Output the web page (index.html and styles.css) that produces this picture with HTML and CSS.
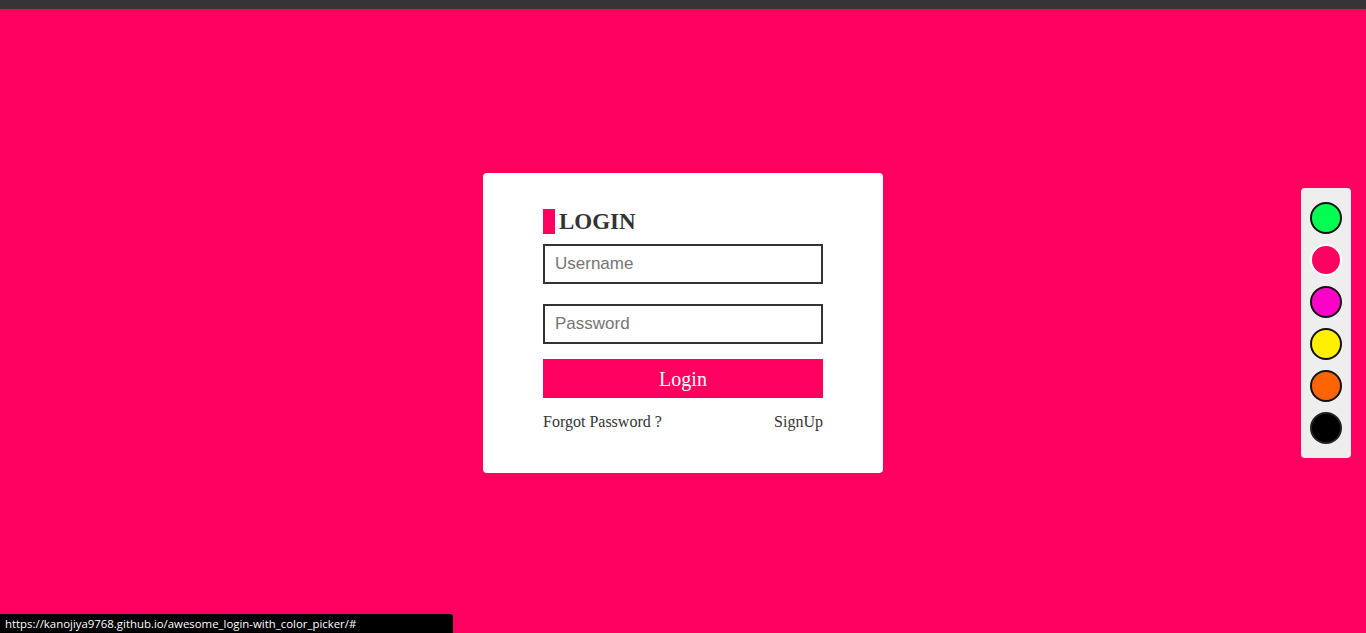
FILE: index.html
```html
<!DOCTYPE html>
<html lang="en">
<head>
<meta charset="utf-8">
<title>Login</title>
<link rel="stylesheet" href="styles.css">
</head>
<body>
<div class="topbar"></div>
<main class="stage">
  <form class="card">
    <h1 class="title"><span class="title-mark"></span><span>LOGIN</span></h1>
    <input class="field" type="text" placeholder="Username">
    <input class="field field-pass" type="password" placeholder="Password">
    <button class="btn" type="button">Login</button>
    <div class="links">
      <a href="#">Forgot Password ?</a>
      <a href="#">SignUp</a>
    </div>
  </form>
</main>
<div class="picker">
  <span class="dot dot-green"></span>
  <span class="dot dot-pink"></span>
  <span class="dot dot-magenta"></span>
  <span class="dot dot-yellow"></span>
  <span class="dot dot-orange"></span>
  <span class="dot dot-black"></span>
</div>
<div class="status">https://kanojiya9768.github.io/awesome_login-with_color_picker/#</div>
</body>
</html>
```
FILE: styles.css
```css
* { box-sizing: border-box; }
html, body { margin: 0; padding: 0; }
body {
  background: #ff0060;
  font-family: "Liberation Serif", "Times New Roman", serif;
  height: 633px;
  overflow: hidden;
}
.topbar {
  height: 9px;
  background: #353535;
}
.stage {
  height: 624px;
  padding-top: 4px;
  display: flex;
  align-items: center;
  justify-content: center;
}
.card {
  width: 400px;
  height: 300px;
  background: #fff;
  border-radius: 4px;
  padding: 36px 60px 0;
  display: flex;
  flex-direction: column;
}
.title {
  margin: 0 0 10px;
  height: 25px;
  display: flex;
  align-items: center;
  gap: 4px;
  font-size: 23px;
  font-weight: bold;
  color: #333;
  line-height: 25px;
}
.title-mark {
  width: 12px;
  height: 25px;
  background: #ff0060;
}
.field {
  width: 280px;
  height: 40px;
  border: 2px solid #333;
  border-radius: 0;
  padding: 0 10px;
  font-family: "Liberation Sans", Arial, sans-serif;
  font-size: 17px;
  color: #333;
  outline: none;
  margin: 0;
}
.field::placeholder { color: #757575; }
.field-pass { margin-top: 20px; }
.btn {
  margin-top: 15px;
  width: 280px;
  height: 39px;
  border: none;
  background: #ff0060;
  color: #fff;
  font-family: "Liberation Serif", "Times New Roman", serif;
  font-size: 20px;
  padding: 1px 0 0;
  cursor: pointer;
}
.links {
  margin-top: 15px;
  display: flex;
  justify-content: space-between;
  font-size: 16px;
}
.links a {
  color: #333;
  text-decoration: none;
}
.picker {
  position: fixed;
  top: 188px;
  right: 15px;
  width: 50px;
  padding: 14px 9px;
  background: #eee;
  border-radius: 4px;
  display: flex;
  flex-direction: column;
  gap: 10px;
}
.dot {
  display: block;
  width: 32px;
  height: 32px;
  border-radius: 50%;
  border: 2px solid #111;
}
.dot-green { background: #00ff50; }
.dot-pink { background: #ff0060; border-color: #fff; }
.dot-magenta { background: #ff00c8; }
.dot-yellow { background: #fff000; }
.dot-orange { background: #ff6400; }
.dot-black { background: #000; border-color: #222; }
.status {
  position: fixed;
  left: 0;
  bottom: 0;
  width: 453px;
  height: 19px;
  background: #000;
  color: #fff;
  border-top-right-radius: 3px;
  font-family: "Open Sans", "Noto Sans", sans-serif;
  font-size: 11.4px;
  line-height: 19px;
  padding-left: 5px;
  white-space: nowrap;
}
```
